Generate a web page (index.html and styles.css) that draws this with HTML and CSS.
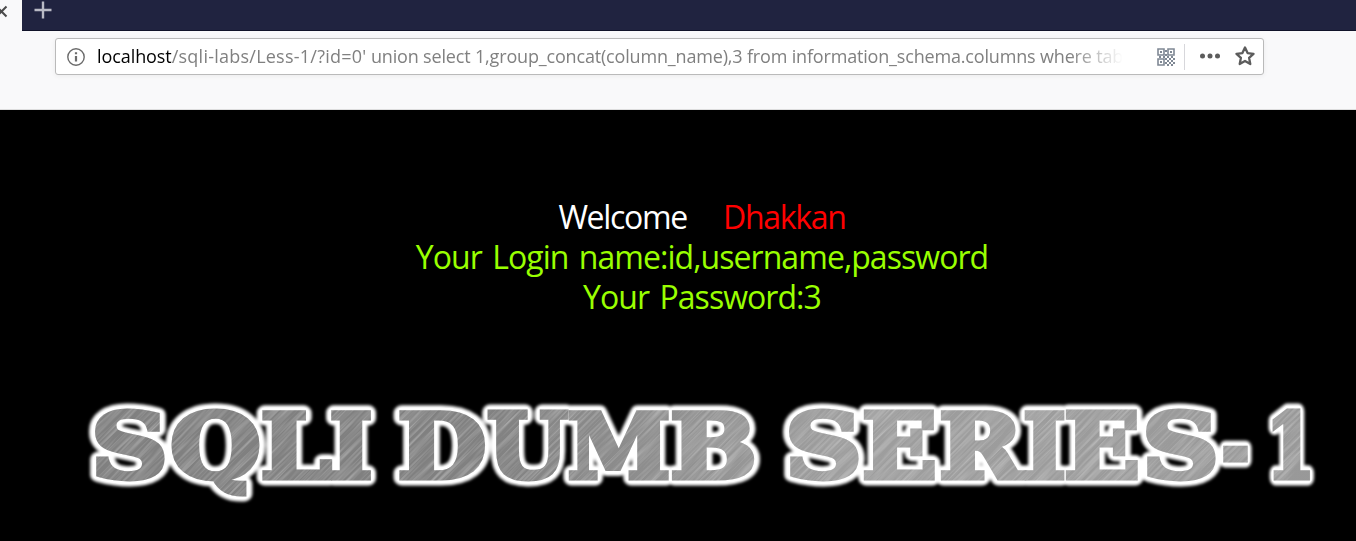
FILE: index.html
```html
<!DOCTYPE html>
<html lang="en">
  <head>
    <meta charset="UTF-8" />
    <meta name="viewport" content="width=device-width, initial-scale=1.0" />
    <title>Less-1 **Error Based- String**</title>

    <link rel="stylesheet" href="styles.css">
  </head>

  <body>
    <div class="tabs">
      <div class="tab">
        <svg width="9" height="18" viewBox="0 0 9 18">
          <path d="M-3.500 6.500L6.500 16.500M6.500 6.500L-3.500 16.500" />
        </svg>
      </div>
      <svg class="new-tab" width="18" height="18" viewBox="0 0 18 18">
        <path d="M9 0.500V17.500M0.500 9H17.500" />
      </svg>
    </div>

    <div class="toolbar">
      <div class="url-bar">
        <svg class="info" width="18" height="18" viewBox="0 0 18 18">
          <circle cx="9" cy="9" r="8.200" />
          <path d="M9 8V13.500M9 4.200V6.300" />
        </svg>
        <div class="url"><span class="host">localhost</span><span class="path">/sqli-labs/Less-1/?id=0'</span> union select 1,group_concat(column_name),3 from information_schema.columns where tab</div>
        <svg class="qr" width="18" height="18" viewBox="0 0 18 18">
          <path class="qr-box" d="M1 1h6v6h-6zM11 1h6v6h-6zM1 11h6v6h-6z" />
          <path class="qr-dot" d="M3 3h2v2h-2zM13 3h2v2h-2zM3 13h2v2h-2zM8 2h2v2h-2zM8 6h2v2h-2zM10 8h2v2h-2zM14 8h2v2h-2zM2 8h2v2h-2zM6 8h2v2h-2zM8 10h2v2h-2zM12 10h2v2h-2zM16 10h2v2h-2zM10 12h2v2h-2zM14 12h2v2h-2zM8 14h2v2h-2zM12 14h2v2h-2zM16 14h2v2h-2zM10 16h2v2h-2zM14 16h2v2h-2z" />
        </svg>
        <div class="divider"></div>
        <svg class="dots" width="20" height="6" viewBox="0 0 20 6">
          <circle cx="2.500" cy="3" r="2.500" />
          <circle cx="10" cy="3" r="2.500" />
          <circle cx="17.500" cy="3" r="2.500" />
        </svg>
        <svg class="star" width="20" height="20" viewBox="0 0 20 20">
          <path d="M10 1.500L12.600 7.100L18.500 7.800L14.100 11.900L15.300 18L10 15L4.700 18L5.900 11.900L1.500 7.800L7.400 7.100Z" />
        </svg>
      </div>
    </div>

    <main>
      <div class="welcome">Welcome <span class="name">Dhakkan</span></div>
      <div class="login">Your Login name:id,username,password</div>
      <div class="password">Your Password:3</div>

      <svg class="banner" width="1356" height="150" viewBox="0 380 1356 150">
        <defs>
          <g id="title">
            <text x="91" y="477.500" textLength="77" lengthAdjust="spacingAndGlyphs">S</text>
            <text x="170" y="477.500" textLength="91" lengthAdjust="spacingAndGlyphs">Q</text>
            <text x="260.500" y="477.500" textLength="71" lengthAdjust="spacingAndGlyphs">L</text>
            <text x="329.500" y="477.500" textLength="43" lengthAdjust="spacingAndGlyphs">I</text>

            <text x="397.500" y="477.500" textLength="89" lengthAdjust="spacingAndGlyphs">D</text>
            <text x="487" y="477.500" textLength="81" lengthAdjust="spacingAndGlyphs">U</text>
            <text x="567.500" y="477.500" textLength="103" lengthAdjust="spacingAndGlyphs">M</text>
            <text x="670" y="477.500" textLength="87" lengthAdjust="spacingAndGlyphs">B</text>

            <text x="785" y="477.500" textLength="77" lengthAdjust="spacingAndGlyphs">S</text>
            <text x="862" y="477.500" textLength="75" lengthAdjust="spacingAndGlyphs">E</text>
            <text x="939" y="477.500" textLength="84" lengthAdjust="spacingAndGlyphs">R</text>
            <text x="1023" y="477.500" textLength="43" lengthAdjust="spacingAndGlyphs">I</text>
            <text x="1064" y="477.500" textLength="76" lengthAdjust="spacingAndGlyphs">E</text>
            <text x="1142" y="477.500" textLength="77" lengthAdjust="spacingAndGlyphs">S</text>
            <text x="1221.500" y="477.500" textLength="28" lengthAdjust="spacingAndGlyphs">-</text>
            <text x="1266" y="477.500" textLength="49" lengthAdjust="spacingAndGlyphs">1</text>
          </g>
          <linearGradient id="metal" x1="0" y1="0" x2="1356" y2="0" gradientUnits="userSpaceOnUse">
            <stop offset="0" stop-color="#808080" />
            <stop offset="0.350" stop-color="#808080" />
            <stop offset="0.620" stop-color="#9e9e9e" />
            <stop offset="1" stop-color="#989898" />
          </linearGradient>
          <filter id="blur" x="-5%" y="-30%" width="110%" height="160%">
            <feGaussianBlur stdDeviation="1.800" />
          </filter>
          <filter id="brushed" x="0" y="0" width="100%" height="100%">
            <feTurbulence type="fractalNoise" baseFrequency="0.015 0.450" numOctaves="3" seed="4" />
            <feColorMatrix values="0 0 0 0 1  0 0 0 0 1  0 0 0 0 1  0.650 0 0 0 -0.250" />
          </filter>
          <mask id="letters" maskUnits="userSpaceOnUse" x="0" y="380" width="1356" height="150">
            <use href="#title" class="letter-mask" />
          </mask>
        </defs>
        <use href="#title" class="glow" filter="url(#blur)" />
        <use href="#title" class="edge" />
        <g mask="url(#letters)">
          <rect x="0" y="380" width="1356" height="150" fill="url(#metal)" />
          <rect x="-100" y="-700" width="1500" height="1600" filter="url(#brushed)" transform="rotate(-45 678 445)" />
        </g>
      </svg>
    </main>
  </body>
</html>
```

FILE: styles.css
```css
body {
  margin: 0;
  background-color: #000;
  font-family: "Open Sans", "Noto Sans", sans-serif;
  overflow: hidden;
}

svg {
  display: block;
  flex: none;
}

.tabs {
  display: flex;
  height: 31px;
  box-sizing: border-box;
  background-color: #202340;
  box-shadow: inset 0 -1px #111329;
}

.tab {
  width: 22px;
  height: 31px;
  background-color: #f9f9fa;
}

.tab path {
  fill: none;
  stroke: #4a4a4a;
  stroke-width: 2;
}

.new-tab {
  margin: 1px 0 0 12px;
}

.new-tab path {
  stroke: #b9bac5;
  stroke-width: 2.4;
}

.toolbar {
  height: 79px;
  padding: 7px 0 0 55px;
  box-sizing: border-box;
  background-color: #f9f9fa;
  border-bottom: 1px solid #ddd;
}

.url-bar {
  display: flex;
  align-items: center;
  width: 1209px;
  height: 37px;
  padding-left: 11px;
  box-sizing: border-box;
  background-color: #fff;
  border: 1px solid #bababa;
  border-radius: 3px;
  box-shadow: 0 1px 5px rgba(0, 0, 0, 0.06);
}

.info {
  fill: none;
  stroke: #6b6b6b;
  stroke-width: 1.4;
}

.info path {
  stroke-width: 2.2;
}

.url {
  width: 1026px;
  margin: -2px 0 0 12px;
  overflow: hidden;
  white-space: nowrap;
  font-size: 18px;
  letter-spacing: -0.17px;
  color: #808080;
  -webkit-mask-image: linear-gradient(to left, transparent, #000 54px);
  mask-image: linear-gradient(to left, transparent, #000 54px);
}

.host {
  letter-spacing: -0.08px;
  color: #000;
}

.path {
  letter-spacing: 0.24px;
}

.qr {
  margin-left: 34px;
}

.qr-box {
  fill: none;
  stroke: #7f8894;
  stroke-width: 1.6;
}

.qr-dot {
  fill: #7f8894;
}

.divider {
  width: 1px;
  height: 26px;
  margin-left: 9px;
  background-color: #d7d7db;
}

.dots {
  margin: -1px 0 0 15px;
  fill: #5c5c5c;
}

.star {
  margin: -1px 0 0 15px;
  fill: none;
  stroke: #5c5c5c;
  stroke-width: 2.3;
  stroke-linejoin: round;
}

main {
  padding-top: 87px;
  font-size: 32px;
  line-height: 40px;
  letter-spacing: -0.95px;
  word-spacing: 3px;
}

.welcome,
.login,
.password {
  margin-left: 48px;
  text-align: center;
  color: #99ff00;
}

.welcome {
  letter-spacing: -1.3px;
  color: #fff;
}

.name {
  margin-left: 26px;
  color: #f00;
}

.banner {
  margin-top: 63px;
  letter-spacing: 0;
}

.banner text {
  font-family: "DejaVu Serif", serif;
  font-size: 89px;
  font-weight: bold;
}

.glow {
  fill: #fff;
  stroke: #fff;
  stroke-width: 15;
  stroke-linejoin: round;
}

.edge {
  fill: #fff;
  stroke: #fff;
  stroke-width: 10;
  stroke-linejoin: round;
}

.letter-mask {
  fill: #fff;
  stroke: #fff;
  stroke-width: 5;
}
```
